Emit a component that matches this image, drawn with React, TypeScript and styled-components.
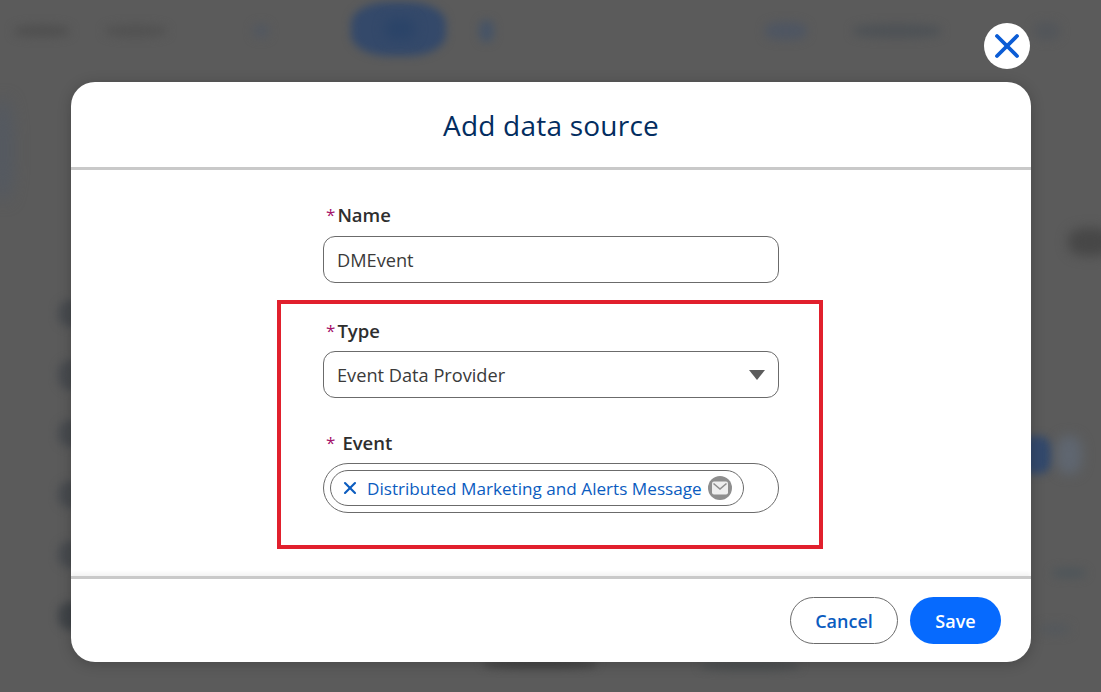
import React from 'react';
import styled, { createGlobalStyle } from 'styled-components';
import { X } from 'lucide-react';

const GlobalStyle = createGlobalStyle`
  html, body {
    height: 100%;
    margin: 0;
  }
  body {
    font-family: "Open Sans", "Noto Sans", "Liberation Sans", sans-serif;
    overflow: hidden;
  }
`;

const Page = styled.div`
  background: #5b5b5b;
  box-sizing: border-box;
  height: 692px;
  overflow: hidden;
  padding: 23px 70px 0 71px;
  position: relative;
  width: 1101px;
`;

const Smudge = styled.div<{ $x: number; $y: number; $w: number; $h: number; $c: string; $b?: number }>`
  background: ${(p) => p.$c};
  border-radius: 40%;
  filter: blur(${(p) => p.$b ?? 5}px);
  height: ${(p) => p.$h}px;
  left: ${(p) => p.$x}px;
  position: absolute;
  top: ${(p) => p.$y}px;
  width: ${(p) => p.$w}px;
`;

const Stack = styled.div`
  display: flex;
  flex-direction: column;
  position: relative;
`;

const CloseButton = styled.button`
  align-items: center;
  align-self: flex-end;
  background: #fff;
  border: none;
  border-radius: 50%;
  color: #0b5cd5;
  display: flex;
  height: 46px;
  justify-content: center;
  margin: 0 1px 13px 0;
  padding: 0;
  width: 46px;
`;

const Modal = styled.div`
  background: #fff;
  border-radius: 24px;
  box-shadow: 0 2px 14px rgba(0, 0, 0, 0.22);
  display: flex;
  flex-direction: column;
  height: 580px;
  overflow: hidden;
`;

const Header = styled.header`
  align-items: center;
  border-bottom: 3px solid #c9c9c9;
  box-sizing: border-box;
  color: #032d60;
  display: flex;
  flex: 0 0 88px;
  font-size: 28px;
  justify-content: center;
  letter-spacing: 0.22px;
`;

const Body = styled.main`
  align-items: center;
  display: flex;
  flex: 1;
  flex-direction: column;
  padding-top: 33px;
`;

const Column = styled.div`
  display: flex;
  flex-direction: column;
  width: 456px;
`;

const Marked = styled.section`
  border: 4px solid #e1202d;
  box-sizing: border-box;
  display: flex;
  flex-direction: column;
  height: 249px;
  margin: 17px 2px 0 0;
  padding: 15px 40px 0 42px;
  width: 546px;
`;

const Label = styled.label<{ $gap?: number; $mb?: number; $mt?: number }>`
  color: #2e2e2e;
  display: flex;
  font-size: 18.5px;
  font-weight: 600;
  gap: ${(p) => p.$gap ?? 2}px;
  height: 25px;
  line-height: 23px;
  margin-bottom: ${(p) => p.$mb ?? 7}px;
  margin-top: ${(p) => p.$mt ?? 0}px;
  padding-left: 3px;
`;

const NameLabel = styled(Label)`
  margin-bottom: 8px;
`;

const Star = styled.span`
  color: #a5116a;
  font-size: 17px;
  font-weight: 400;
`;

const Field = styled.div`
  align-items: center;
  border: 1px solid #6b6b6b;
  border-radius: 12px;
  box-sizing: border-box;
  color: #3a3a3a;
  display: flex;
  font-size: 18.2px;
  height: 47px;
  justify-content: space-between;
  padding: 0 13px;
`;

const Caret = styled.span`
  border-left: 8.5px solid transparent;
  border-right: 8.5px solid transparent;
  border-top: 10px solid #5c5c5c;
  height: 0;
  width: 0;
`;

const PillField = styled.div`
  align-items: center;
  border: 1px solid #6b6b6b;
  border-radius: 25px;
  box-sizing: border-box;
  display: flex;
  height: 50px;
  padding-left: 6px;
`;

const Chip = styled.div`
  align-items: center;
  border: 1px solid #6b6b6b;
  border-radius: 18px;
  box-sizing: border-box;
  color: #0b5cbf;
  display: flex;
  font-size: 17.15px;
  height: 36px;
  padding: 0 11px 0 9px;
  width: 414px;
`;

const ChipText = styled.span`
  flex: 1;
  margin-left: 7px;
  white-space: nowrap;
`;

const ChipBadge = styled.span`
  align-items: center;
  background: #8e8e8e;
  border-radius: 50%;
  color: #fff;
  display: flex;
  height: 24px;
  justify-content: center;
  width: 24px;
`;

const Footer = styled.footer`
  align-items: center;
  border-top: 3px solid #c9c9c9;
  box-shadow: 0 -3px 4px rgba(0, 0, 0, 0.05);
  box-sizing: border-box;
  display: flex;
  flex: 0 0 86px;
  gap: 12px;
  justify-content: flex-end;
  padding-right: 30px;
`;

const Button = styled.button<{ $primary?: boolean }>`
  background: ${(p) => (p.$primary ? '#066afe' : '#fff')};
  border: ${(p) => (p.$primary ? 'none' : '1px solid #6b6b6b')};
  border-radius: 24px;
  color: ${(p) => (p.$primary ? '#fff' : '#0b5cbf')};
  font-family: inherit;
  font-size: 18px;
  font-weight: 600;
  height: 47px;
  padding: 1px 0 0;
  width: ${(p) => (p.$primary ? 91 : 108)}px;
`;

const smudges = [
  { x: 351, y: 2, w: 95, h: 54, c: '#34496a', b: 4 },
  { x: 385, y: 18, w: 30, h: 22, c: '#2b4468', b: 6 },
  { x: 479, y: 20, w: 15, h: 22, c: '#475466', b: 4 },
  { x: 14, y: 25, w: 56, h: 12, c: '#505050', b: 5 },
  { x: 105, y: 25, w: 62, h: 12, c: '#525252', b: 5 },
  { x: 253, y: 24, w: 16, h: 14, c: '#535860', b: 5 },
  { x: 765, y: 22, w: 42, h: 18, c: '#4f5662', b: 5 },
  { x: 853, y: 24, w: 88, h: 14, c: '#4e5256', b: 5 },
  { x: 1034, y: 22, w: 26, h: 18, c: '#53565a', b: 5 },
  { x: -6, y: 100, w: 18, h: 100, c: '#535962', b: 8 },
  { x: 58, y: 300, w: 30, h: 27, c: '#484b4f', b: 4 },
  { x: 58, y: 360, w: 30, h: 30, c: '#484b4f', b: 4 },
  { x: 58, y: 420, w: 30, h: 27, c: '#484b4f', b: 4 },
  { x: 58, y: 481, w: 30, h: 27, c: '#484b4f', b: 4 },
  { x: 58, y: 541, w: 30, h: 27, c: '#484b4f', b: 4 },
  { x: 58, y: 602, w: 30, h: 28, c: '#404448', b: 4 },
  { x: 1068, y: 228, w: 44, h: 28, c: '#474747', b: 6 },
  { x: 1020, y: 436, w: 32, h: 38, c: '#33496c', b: 4 },
  { x: 1056, y: 436, w: 26, h: 38, c: '#5f6670', b: 6 },
  { x: 1052, y: 568, w: 34, h: 10, c: '#4f565a', b: 4 },
  { x: 1040, y: 624, w: 30, h: 10, c: '#54585c', b: 5 },
  { x: 483, y: 660, w: 114, h: 8, c: '#3f3f3f', b: 4 },
  { x: 700, y: 662, w: 100, h: 8, c: '#4a4e50', b: 4 },
];

const App: React.FC = () => {
  return (
    <>
      <GlobalStyle />
      <Page>
        {smudges.map((s) => (
          <Smudge
            key={`${s.x}-${s.y}`}
            $b={s.b}
            $c={s.c}
            $h={s.h}
            $w={s.w}
            $x={s.x}
            $y={s.y}
          />
        ))}
        <Stack>
          <CloseButton aria-label="Close">
            <X size={40} strokeWidth={2.3} />
          </CloseButton>
          <Modal>
            <Header>Add data source</Header>
            <Body>
              <Column>
                <NameLabel><Star>*</Star>Name</NameLabel>
                <Field>DMEvent</Field>
              </Column>
              <Marked>
                <Label><Star>*</Star>Type</Label>
                <Field>
                  Event Data Provider
                  <Caret />
                </Field>
                <Label $gap={7} $mt={33}><Star>*</Star>Event</Label>
                <PillField>
                  <Chip>
                    <X size={20} strokeWidth={2.5} />
                    <ChipText>Distributed Marketing and Alerts Message</ChipText>
                    <ChipBadge>
                      <svg fill="none" height="14" viewBox="0 0 16 14" width="16">
                        <rect fill="#eee" height="13" rx="2" width="16" y="0.5" />
                        <path d="M1.5 2.5 L8 8 L14.5 2.5" stroke="#8e8e8e" strokeWidth="1.6" />
                      </svg>
                    </ChipBadge>
                  </Chip>
                </PillField>
              </Marked>
            </Body>
            <Footer>
              <Button>Cancel</Button>
              <Button $primary>Save</Button>
            </Footer>
          </Modal>
        </Stack>
      </Page>
    </>
  );
};

export default App;
